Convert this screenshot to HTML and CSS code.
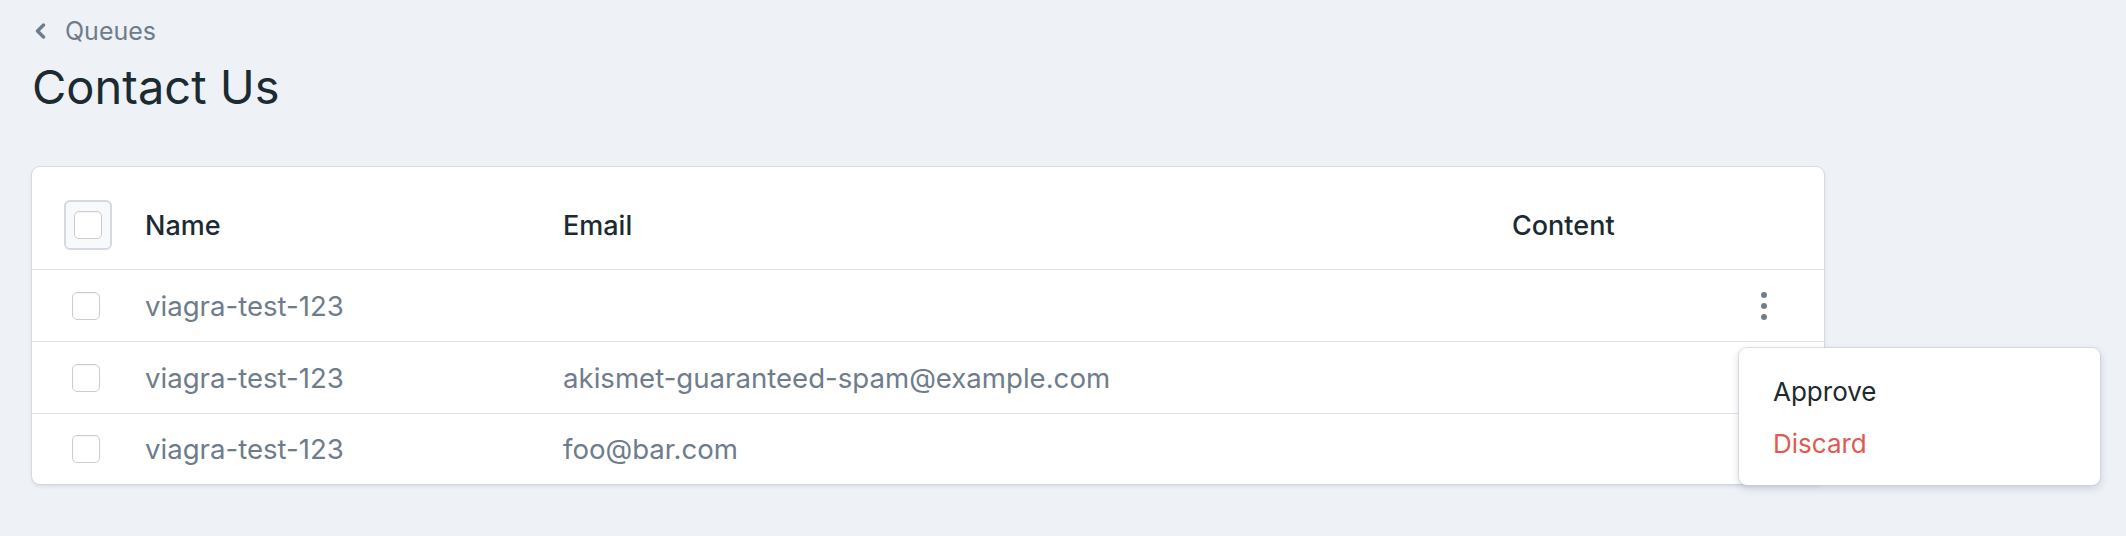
FILE: index.html
```html
<!DOCTYPE html>
<html>
<head>
<meta charset="utf-8">
<link rel="stylesheet" href="styles.css">
</head>
<body>
<div class="page">
  <a class="back" href="#">
    <svg class="chev" width="12" height="16" viewBox="0 0 12 16"><path d="M9.5 2 L3.5 8 L9.5 14" fill="none" stroke="currentColor" stroke-width="3.4" stroke-linecap="round" stroke-linejoin="round"/></svg>
    <span>Queues</span>
  </a>
  <h1 class="title">Contact Us</h1>
  <div class="card">
    <div class="row head">
      <div class="cell check"><span class="check-wrap"><span class="box"></span></span></div>
      <div class="cell">Name</div>
      <div class="cell">Email</div>
      <div class="cell">Content</div>
    </div>
    <div class="row">
      <div class="cell check"><span class="box"></span></div>
      <div class="cell">viagra-test-123</div>
      <div class="cell"></div>
      <div class="cell actions"><span class="dots"><i></i><i></i><i></i></span></div>
    </div>
    <div class="row">
      <div class="cell check"><span class="box"></span></div>
      <div class="cell">viagra-test-123</div>
      <div class="cell">akismet-guaranteed-spam@example.com</div>
      <div class="cell"></div>
    </div>
    <div class="row last">
      <div class="cell check"><span class="box"></span></div>
      <div class="cell">viagra-test-123</div>
      <div class="cell">foo@bar.com</div>
      <div class="cell"></div>
    </div>
  </div>
  <div class="menu">
    <div class="menu-item">Approve</div>
    <div class="menu-item danger">Discard</div>
  </div>
</div>
</body>
</html>
```
FILE: styles.css
```css
html, body {
  margin: 0;
  background: #eef1f6;
  font-family: Inter, "Noto Sans", sans-serif;
}
.page {
  position: relative;
  padding: 19px 0 0 32px;
  height: 517px;
}
.back {
  display: flex;
  align-items: center;
  gap: 19px;
  height: 24px;
  font-size: 25px;
  line-height: 24px;
  color: #6f7c8b;
  text-decoration: none;
  padding-left: 2px;
}
.chev {
  color: #6f7c8b;
  display: block;
}
.title {
  margin: 16px 0 0 0;
  font-size: 47px;
  line-height: 56px;
  font-weight: 400;
  color: #1c2a31;
}
.card {
  margin-top: 52px;
  width: 1792px;
  background: #fff;
  border-radius: 8px;
  box-shadow: 0 0 0 1px rgba(200, 206, 214, 0.5), 0 2px 4px rgba(30, 40, 60, 0.12);
}
.row {
  display: grid;
  grid-template-columns: 113px 418px 949px 1fr;
  align-items: center;
  height: 71px;
  border-bottom: 1px solid #dde2e8;
  font-size: 27.6px;
  color: #6f7c8b;
}
.row.last {
  border-bottom: none;
  height: 70px;
}
.row.head {
  height: 50px;
  padding: 33px 0 19px;
  font-size: 27px;
  font-weight: 500;
  color: #1c2a31;
}
.cell {
  white-space: nowrap;
}
.check {
  display: flex;
  padding-left: 40px;
}
.head .check {
  padding-left: 32px;
}
.check-wrap {
  width: 44px;
  height: 46px;
  border: 2px solid #d3dae2;
  border-radius: 6px;
  background: #f8f9fb;
  display: flex;
  align-items: center;
  justify-content: center;
}
.box {
  display: block;
  width: 26px;
  height: 26px;
  border: 1px solid #c8cdd3;
  border-radius: 5px;
  background: #fff;
  box-shadow: inset 0 1px 1px rgba(0, 0, 0, 0.04);
}
.actions {
  display: flex;
  padding-left: 249px;
}
.dots {
  display: flex;
  flex-direction: column;
  gap: 5px;
}
.dots i {
  display: block;
  width: 6px;
  height: 6px;
  border-radius: 50%;
  background: #727d8c;
}
.menu {
  position: absolute;
  left: 1739px;
  top: 348px;
  width: 361px;
  height: 137px;
  box-sizing: border-box;
  padding: 18px 0 0 34px;
  background: #fff;
  border-radius: 8px;
  box-shadow: 0 0 0 1px rgba(200, 206, 214, 0.6), 0 3px 8px rgba(30, 40, 60, 0.18);
}
.menu-item {
  font-size: 26px;
  line-height: 52px;
  color: #1c2a31;
}
.menu-item.danger {
  color: #df5b50;
}
```
